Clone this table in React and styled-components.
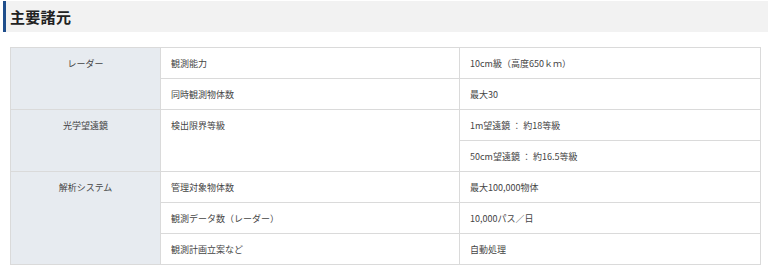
import React from "react";
import styled, { createGlobalStyle } from "styled-components";

const Global = createGlobalStyle`
  body {
    margin: 0;
    background: #fff;
    font-family: "Noto Sans CJK JP", "Noto Sans", sans-serif;
  }
`;

const Page = styled.div`
  width: 768px;
  padding-top: 1px;
`;

const Heading = styled.h2`
  margin: 0 0 15px 3px;
  height: 31px;
  background: #f2f2f2;
  border-left: 3px solid #1f4e8c;
  padding-left: 4px;
  font-size: 15px;
  font-weight: 700;
  color: #222;
  display: flex;
  align-items: center;
  letter-spacing: 0.3px;
`;

const Table = styled.table`
  margin-left: 10px;
  width: 750px;
  border-collapse: collapse;
  table-layout: fixed;
  font-size: 9px;
  color: #444;
`;

const Col = styled.col`
  width: ${(p) => p.$w}px;
`;

const Cell = styled.td`
  border: 1px solid #dadada;
  height: 30px;
  padding: ${(p) => (p.$top ? "9px 10px 0" : "0 10px")};
  vertical-align: ${(p) => (p.$top ? "top" : "middle")};
  line-height: 13px;
`;

const Category = styled(Cell)`
  background: #e7ebf0;
  text-align: center;
`;

const rows = [
  { cat: "レーダー", items: [["観測能力", "10cm級（高度650ｋｍ）"], ["同時観測物体数", "最大30"]] },
  { cat: "光学望遠鏡", items: [["検出限界等級", "1m望遠鏡 ： 約18等級"], [null, "50cm望遠鏡 ： 約16.5等級"]] },
  {
    cat: "解析システム",
    items: [
      ["管理対象物体数", "最大100,000物体"],
      ["観測データ数（レーダー）", "10,000パス／日"],
      ["観測計画立案など", "自動処理"],
    ],
  },
];

export default function App() {
  return (
    <Page>
      <Global />
      <Heading>主要諸元</Heading>
      <Table>
        <colgroup>
          <Col $w={150} />
          <Col $w={299} />
          <Col $w={301} />
        </colgroup>
        <tbody>
          {rows.map((g) =>
            g.items.map(([label, value], i) => {
              const merged = g.items[i + 1] && g.items[i + 1][0] === null;
              return (
                <tr key={g.cat + i}>
                  {i === 0 && (
                    <Category rowSpan={g.items.length} $top>
                      {g.cat}
                    </Category>
                  )}
                  {label !== null && (
                    <Cell rowSpan={merged ? 2 : 1} $top={merged}>
                      {label}
                    </Cell>
                  )}
                  <Cell>{value}</Cell>
                </tr>
              );
            })
          )}
        </tbody>
      </Table>
    </Page>
  );
}
